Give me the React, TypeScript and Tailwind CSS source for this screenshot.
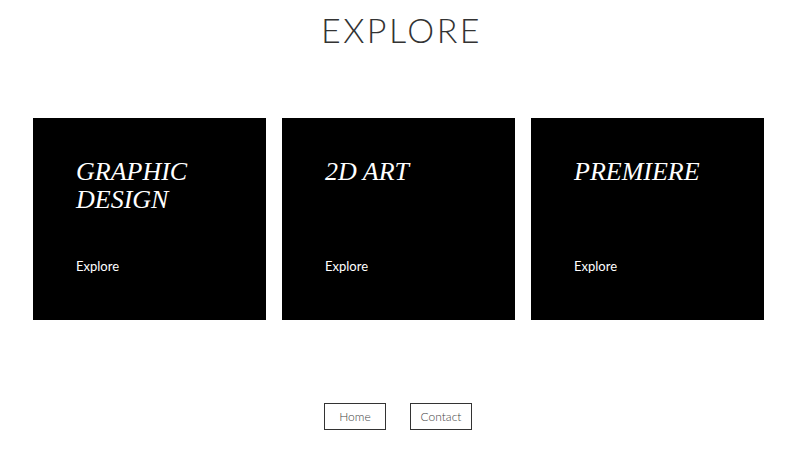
export default function App() {
  const cards = [
    { title: ["GRAPHIC", "DESIGN"] },
    { title: ["2D ART"] },
    { title: ["PREMIERE"] },
  ];

  return (
    <div className="min-h-screen bg-white font-['Lato',sans-serif]">
      {/* Header */}
      <h1 className="pt-[13px] pl-[3px] text-center text-[34px] leading-none font-light tracking-[2.5px] text-[#333]">
        EXPLORE
      </h1>

      {/* Cards */}
      <div className="mt-[71px] ml-[33px] flex w-[731px] gap-4">
        {cards.map((c) => (
          <div key={c.title.join(" ")} className="flex h-[202px] w-[233px] flex-col bg-black pt-[40px] pl-[43px]">
            <h2 className="font-['Liberation_Serif',serif] text-[26px] leading-[28px] italic text-white">
              {c.title.map((t) => (
                <div key={t}>{t}</div>
              ))}
            </h2>
            <a
              className={`${c.title.length > 1 ? "mt-[44px]" : "mt-[72px]"} text-[13px] leading-4 text-white`}
            >
              Explore
            </a>
          </div>
        ))}
      </div>

      {/* Footer nav */}
      <nav className="mt-[83px] flex justify-center gap-6 pr-[4px]">
        <a className="flex h-[27px] w-[62px] items-center justify-center border border-[#333] text-[12px] font-light text-[#444]">
          Home
        </a>
        <a className="flex h-[27px] w-[62px] items-center justify-center border border-[#333] text-[12px] font-light text-[#444]">
          Contact
        </a>
      </nav>
    </div>
  );
}
